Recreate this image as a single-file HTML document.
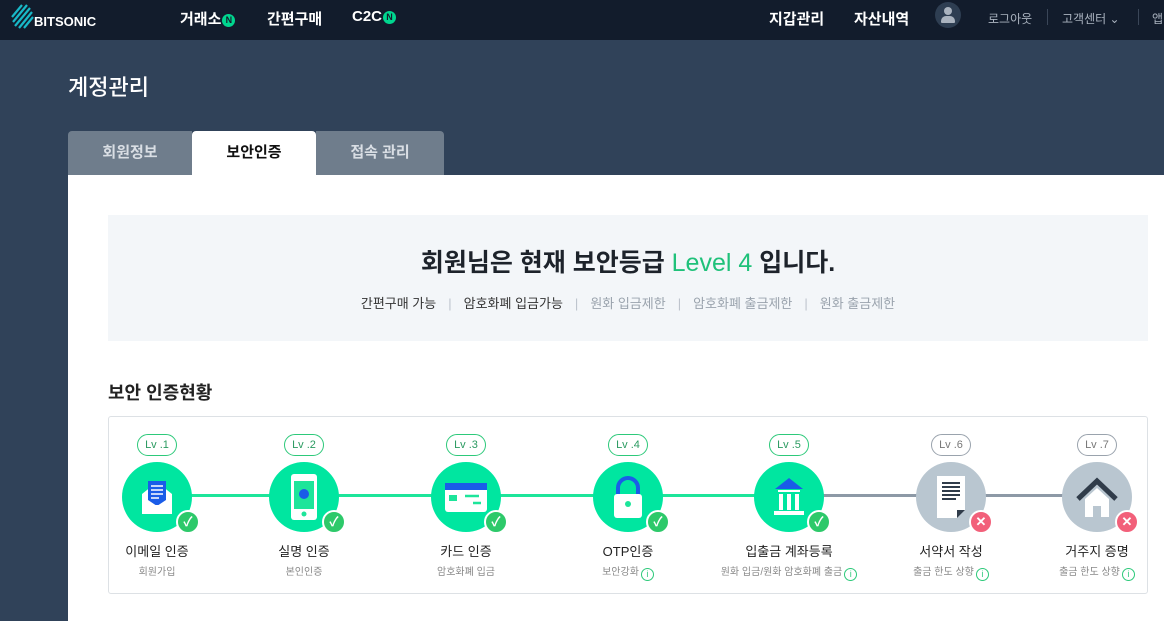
<!DOCTYPE html>
<html><head><meta charset="utf-8"><style>
*{margin:0;padding:0;box-sizing:border-box}
body{width:1164px;height:621px;overflow:hidden;background:#304259;font-family:"Liberation Sans","Noto Sans CJK KR",sans-serif;position:relative}
.nav{position:absolute;left:0;top:0;width:1164px;height:40px;background:#121c2c;color:#fff}
.nav span{position:absolute;top:8px;font-size:15px;font-weight:bold}
.n{display:inline-block;width:13px;height:13px;border-radius:50%;background:#00d68f;color:#121c2c;font-size:9px;text-align:center;line-height:13px;vertical-align:1px;margin-left:1px;font-style:normal}
.small{font-size:12px!important;font-weight:normal!important;color:#aab3bf;top:10px!important}
.sep{position:absolute;top:9px;width:1px;height:16px;background:#3a4658}
h1{position:absolute;left:68px;top:70px;color:#fff;font-size:22px;font-weight:500}
.tab{position:absolute;top:131px;height:44px;width:124px;background:#6f7d8c;color:#d9dee4;font-size:15px;text-align:center;line-height:44px;font-weight:bold}
.content{position:absolute;left:68px;top:175px;width:1096px;height:446px;background:#fff}
.banner{position:absolute;left:108px;top:215px;width:1040px;height:126px;background:#f3f6f9;text-align:center}
.banner .t{margin-top:28px;font-size:25px;color:#1d232b;font-weight:bold}
.banner .t span{font-weight:normal}
.banner .s{margin-top:14px;font-size:13px;color:#333}
.banner .s i{font-style:normal;color:#bcc3cc;margin:0 12px}
.banner .s .g{color:#9aa3ad}
.st{position:absolute;left:108px;top:379px;font-size:18px;color:#222;font-weight:bold}
.card{position:absolute;left:108px;top:416px;width:1040px;height:178px;border:1px solid #dde1e5;border-radius:3px}
.line{position:absolute;top:494px;height:3px}
.lv{position:absolute;top:434px;width:40px;height:22px;border:1px solid #2dc97a;border-radius:11px;font-size:11px;color:#2a9a60;text-align:center;line-height:20px;background:#fff}
.c{position:absolute;top:462px;width:70px;height:70px;border-radius:50%;overflow:hidden}
.b{position:absolute;width:24px;height:24px;border-radius:50%;border:2px solid #fff;color:#fff;font-size:13px;font-weight:bold;text-align:center;line-height:20px}
.lb{position:absolute;top:541px;width:160px;text-align:center;font-size:13px;color:#222}
.sb{position:absolute;top:563px;width:200px;text-align:center;font-size:10px;color:#888}
.sb b{display:inline-block;width:13px;height:13px;border:1px solid #2dc97a;border-radius:50%;color:#2dc97a;font-size:9px;line-height:11px;font-weight:normal;vertical-align:-2px;margin-left:2px}
</style></head><body>
<div class="nav">
<svg style="position:absolute;left:10px;top:3px" width="26" height="26" viewBox="0 0 26 26"><g stroke="#18b9c8" stroke-width="2.2"><path d="M2 14L12 2M3 19L17 2M5 23L20 5M9 25L22 9M14 25L23 14"/></g></svg>
<span style="left:34px;top:14px;font-size:13px">BITSONIC</span>
<span style="left:180px">거래소<i class="n">N</i></span>
<span style="left:267px">간편구매</span>
<span style="left:352px">C2C<i class="n">N</i></span>
<span style="left:769px">지갑관리</span>
<span style="left:854px">자산내역</span>
<div style="position:absolute;left:935px;top:2px;width:26px;height:26px;border-radius:50%;background:#2e3e52"><div style="position:absolute;left:9px;top:5px;width:8px;height:8px;border-radius:50%;background:#aab3bf"></div><div style="position:absolute;left:6px;top:14px;width:14px;height:7px;border-radius:5px 5px 1px 1px;background:#aab3bf"></div></div>
<span class="small" style="left:988px">로그아웃</span>
<div class="sep" style="left:1047px"></div>
<span class="small" style="left:1062px">고객센터 ⌄</span>
<div class="sep" style="left:1138px"></div>
<span class="small" style="left:1152px">앱</span>
</div>
<h1>계정관리</h1>
<div class="tab" style="left:68px;border-radius:4px 0 0 0">회원정보</div>
<div class="tab" style="left:192px;background:#fff;color:#111;border-radius:4px 4px 0 0">보안인증</div>
<div class="tab" style="left:316px;width:128px;border-radius:0 4px 0 0">접속 관리</div>
<div class="content"></div>
<div class="banner"><div class="t">회원님은 현재 보안등급 <span style="color:#1fc17a">Level 4</span> 입니다.</div>
<div class="s">간편구매 가능<i>|</i>암호화폐 입금가능<i>|</i><span class="g">원화 입금제한</span><i>|</i><span class="g">암호화폐 출금제한</span><i>|</i><span class="g">원화 출금제한</span></div></div>
<div class="st">보안 인증현황</div>
<div class="card"></div>
<div class="line" style="left:160px;width:630px;background:#1de59a"></div>
<div class="line" style="left:790px;width:310px;background:#8d99a6"></div>

<div class="lv" style="left:137px">Lv .1</div><div class="lv" style="left:284px">Lv .2</div><div class="lv" style="left:446px">Lv .3</div><div class="lv" style="left:608px">Lv .4</div><div class="lv" style="left:769px">Lv .5</div>
<div class="lv" style="left:931px;border-color:#9aa3ad;color:#777">Lv .6</div><div class="lv" style="left:1077px;border-color:#9aa3ad;color:#777">Lv .7</div>

<div class="c" style="left:122px;background:#00e6a0"><svg width="70" height="70"><path d="M20 32L35 20L50 32V52H20Z" fill="#fff"/><rect x="26" y="19" width="18" height="24" fill="#1a5ce8"/><path d="M29 24h12M29 28h12M29 32h12M29 36h8" stroke="#fff" stroke-width="1.5"/><path d="M20 34L35 44L50 34V52H20Z" fill="#fff"/></svg></div>
<div class="c" style="left:269px;background:#00e6a0"><svg width="70" height="70"><rect x="22" y="12" width="26" height="46" rx="3" fill="#fff"/><rect x="25" y="19" width="20" height="28" fill="#1de59a"/><circle cx="35" cy="32" r="5" fill="#1a5ce8"/><circle cx="35" cy="52" r="2.5" fill="#1de59a"/></svg></div>
<div class="c" style="left:431px;background:#00e6a0"><svg width="70" height="70"><rect x="14" y="21" width="42" height="29" rx="3" fill="#fff"/><rect x="14" y="21" width="42" height="7" fill="#1a5ce8"/><rect x="18" y="33" width="8" height="6" fill="#1de59a"/><path d="M34 34h14M42 41h8" stroke="#1de59a" stroke-width="2.5"/></svg></div>
<div class="c" style="left:593px;background:#00e6a0"><svg width="70" height="70"><path d="M25 34V26a10 10 0 0 1 20 0v8" stroke="#1a5ce8" stroke-width="4" fill="none"/><rect x="21" y="32" width="28" height="24" rx="3" fill="#fff"/><circle cx="35" cy="42" r="3" fill="#1de59a"/></svg></div>
<div class="c" style="left:754px;background:#00e6a0"><svg width="70" height="70"><path d="M35 16L49 27H21Z" fill="#1a5ce8"/><path d="M24 29h22" stroke="#fff" stroke-width="2"/><path d="M27 32v16M35 32v16M43 32v16" stroke="#fff" stroke-width="4"/><rect x="20" y="49" width="30" height="4" fill="#fff"/></svg></div>
<div class="c" style="left:916px;background:#b9c6d0"><svg width="70" height="70"><path d="M21 14H49V48L41 56H21Z" fill="#fff"/><path d="M26 21h18M26 25h18M26 29h18M26 33h18M26 37h14" stroke="#303c4a" stroke-width="2"/><path d="M41 56V48H49Z" fill="#303c4a"/></svg></div>
<div class="c" style="left:1062px;background:#b9c6d0"><svg width="70" height="70"><path d="M16 37L35 19L54 37" stroke="#303c4a" stroke-width="5" fill="none"/><path d="M23 37L35 26L47 37V55H23Z" fill="#fff"/><rect x="31" y="44" width="8" height="11" fill="#b9c6d0"/></svg></div>

<div class="b" style="left:176px;top:510px;background:#2dc96a">✓</div><div class="b" style="left:322px;top:510px;background:#2dc96a">✓</div><div class="b" style="left:484px;top:510px;background:#2dc96a">✓</div><div class="b" style="left:646px;top:510px;background:#2dc96a">✓</div><div class="b" style="left:807px;top:510px;background:#2dc96a">✓</div>
<div class="b" style="left:969px;top:510px;background:#f2607a">✕</div><div class="b" style="left:1115px;top:510px;background:#f2607a">✕</div>

<div class="lb" style="left:77px">이메일 인증</div><div class="lb" style="left:224px">실명 인증</div><div class="lb" style="left:386px">카드 인증</div><div class="lb" style="left:548px">OTP인증</div><div class="lb" style="left:709px">입출금 계좌등록</div><div class="lb" style="left:871px">서약서 작성</div><div class="lb" style="left:1017px">거주지 증명</div>
<div class="sb" style="left:57px">회원가입</div><div class="sb" style="left:204px">본인인증</div><div class="sb" style="left:366px">암호화폐 입금</div><div class="sb" style="left:528px">보안강화<b>i</b></div><div class="sb" style="left:689px">원화 입금/원화 암호화폐 출금<b>i</b></div><div class="sb" style="left:851px">출금 한도 상향<b>i</b></div><div class="sb" style="left:997px">출금 한도 상향<b>i</b></div>
</body></html>
